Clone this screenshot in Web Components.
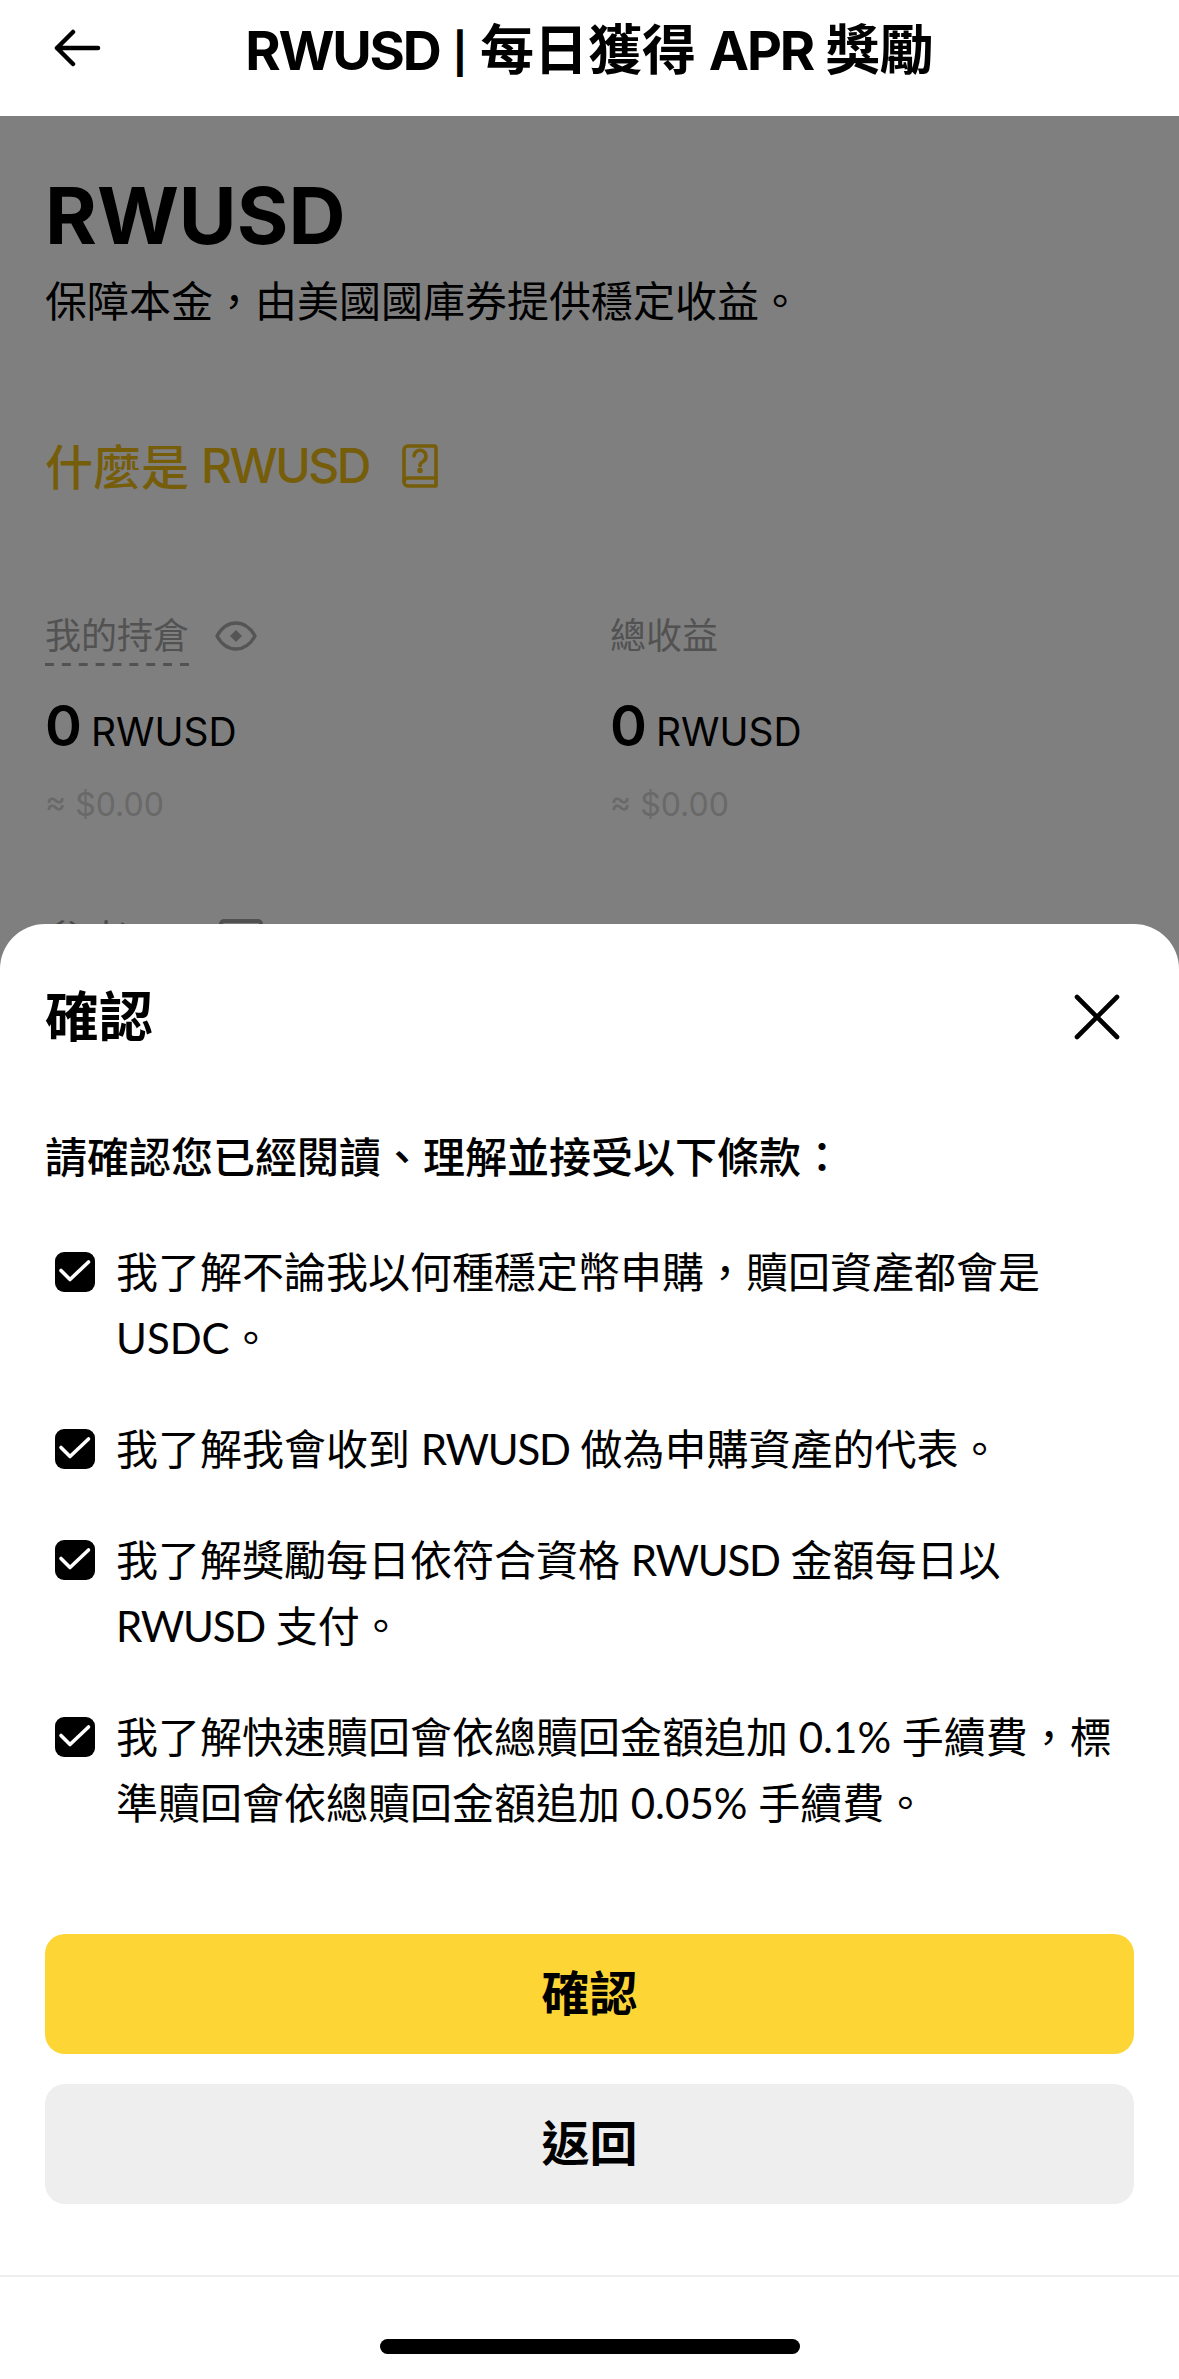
<!DOCTYPE html>
<html lang="zh-Hant">
<head>
<meta charset="utf-8">
<title>RWUSD</title>
<style>
  html, body { margin: 0; padding: 0; background: #fff; }
  body { font-family: "Inter", "Noto Sans CJK TC", sans-serif; color: #000; }
</style>
</head>
<body>
<rw-page>
  <rw-header slot="header"><span>RWUSD</span> <span class="sep">|</span> 每日獲得 <span>APR</span> 獎勵</rw-header>
  <rw-stat slot="stats" label="我的持倉" value="0" unit="RWUSD" fiat="≈ $0.00" dashed eye></rw-stat>
  <rw-stat slot="stats" label="總收益" value="0" unit="RWUSD" fiat="≈ $0.00"></rw-stat>
  <rw-sheet slot="sheet" heading="確認" intro="請確認您已經閱讀、理解並接受以下條款：">
    <rw-check>我了解不論我以何種穩定幣申購，贖回資產都會是 USDC。</rw-check>
    <rw-check>我了解我會收到 <span>RWUSD</span> 做為申購資產的代表。</rw-check>
    <rw-check>我了解獎勵每日依符合資格 <span>RWUSD</span> 金額每日以 <span>RWUSD</span> 支付。</rw-check>
    <rw-check>我了解快速贖回會依總贖回金額追加 0.1% 手續費，標準贖回會依總贖回金額追加 0.05% 手續費。</rw-check>
    <rw-button slot="actions" kind="primary">確認</rw-button>
    <rw-button slot="actions">返回</rw-button>
  </rw-sheet>
</rw-page>

<script>
class RwPage extends HTMLElement {
  constructor() {
    super();
    this.attachShadow({ mode: 'open' });
    this.shadowRoot.innerHTML = `
      <style>
        :host { display: block; position: relative; width: 1179px; height: 2379px; overflow: hidden; }
        main { padding: 61px 45px 0; background: #fff; height: 2202px; position: relative; }
        h1 { margin: 0; font-size: 79px; line-height: 76px; font-weight: 700; }
        .sub { margin: 19px 0 0; font-size: 42px; line-height: 60px; }
        .what { display: flex; align-items: center; margin-top: 100px; height: 64px; color: #ecba14; font-size: 48px; font-weight: 500; }
        .what span { margin: 2px 0 0 12px; letter-spacing: -2.5px; }
        .what svg { margin: 4px 0 0 33px; }
        .stats { display: grid; grid-template-columns: 565px 1fr; margin-top: 110px; }
        .next { display: flex; align-items: center; margin-top: 81px; color: #999; font-size: 42px; line-height: 60px; }
        .next i { display: block; width: 36px; height: 36px; margin-left: 90px; border: 4px solid #a0a0a0; border-radius: 5px; }
        .dim { position: absolute; inset: 0; background: rgba(0,0,0,.5); }
        .sheet { position: absolute; left: 0; right: 0; bottom: 0; }
      </style>
      <slot name="header"></slot>
      <main>
        <h1>RWUSD</h1>
        <p class="sub">保障本金，由美國國庫券提供穩定收益。</p>
        <div class="what">什麼是<span>RWUSD</span>
          <svg width="36" height="44" viewBox="0 0 36 44" fill="none" stroke="currentColor" stroke-width="3.6" stroke-linejoin="round" stroke-linecap="round">
            <path d="M6 2h26a2 2 0 0 1 2 2v38H6a4 4 0 0 1-4-4V6a4 4 0 0 1 4-4z"/>
            <path d="M2 37a4 4 0 0 1 4-3h28"/>
            <path d="M12 12a6 6 0 1 1 9 5.5c-2.2 1.3-3 2.2-3 4.2"/>
            <circle cx="18" cy="26.5" r="1" fill="currentColor"/>
          </svg>
        </div>
        <div class="stats"><slot name="stats"></slot></div>
        <div class="next">參考<i></i></div>
        <div class="dim"></div>
      </main>
      <div class="sheet"><slot name="sheet"></slot></div>
    `;
  }
}

class RwHeader extends HTMLElement {
  constructor() {
    super();
    this.attachShadow({ mode: 'open' });
    this.shadowRoot.innerHTML = `
      <style>
        :host { display: flex; position: relative; height: 116px; align-items: center; justify-content: center; background: #fff; }
        .title { margin-top: -24px; font-size: 54px; font-weight: 700; white-space: nowrap; }
        ::slotted(span) { letter-spacing: -2.2px; }
        ::slotted(.sep) { font-size: 40px; letter-spacing: 0; vertical-align: 2px; }
        .back { position: absolute; left: 54px; top: 27px; }
      </style>
      <svg class="back" width="48" height="42" viewBox="0 0 48 42" fill="none" stroke="#000" stroke-width="4.5" stroke-linecap="round" stroke-linejoin="round">
        <path d="M44 21H3M19 5 3 21l16 16"/>
      </svg>
      <div class="title"><slot></slot></div>
    `;
  }
}

class RwStat extends HTMLElement {
  constructor() {
    super();
    this.attachShadow({ mode: 'open' });
    this.shadowRoot.innerHTML = `
      <style>
        :host { display: block; }
        .head { display: flex; align-items: center; height: 60px; }
        .label { color: #a4a4a4; font-size: 36px; line-height: 60px; }
        .label.dashed { background-image: linear-gradient(90deg, #a4a4a4 9px, transparent 9px); background-size: 16.875px 3px; background-repeat: repeat-x; background-position: 0 100%; }
        .head svg { margin-left: 26px; color: #aaa; }
        .value { display: flex; align-items: baseline; margin-top: 30px; line-height: 60px; }
        .num { font-size: 56px; font-weight: 600; }
        .unit { margin-left: 9px; font-size: 39px; }
        .fiat { margin-top: 18px; color: #d2d2d2; font-size: 32px; line-height: 50px; }
      </style>
      <div class="head">
        <span class="label"></span>
      </div>
      <div class="value"><span class="num"></span><span class="unit"></span></div>
      <div class="fiat"></div>
    `;
  }

  connectedCallback() {
    const root = this.shadowRoot;
    const label = root.querySelector('.label');
    label.textContent = this.getAttribute('label');
    if (this.hasAttribute('dashed')) {
      label.classList.add('dashed');
    }
    if (this.hasAttribute('eye')) {
      root.querySelector('.head').insertAdjacentHTML('beforeend', `
        <svg width="42" height="30" viewBox="0 0 42 30" fill="none" stroke="currentColor" stroke-width="3.5" stroke-linejoin="round">
          <path d="M2 15C7 6 13 2 21 2s14 4 19 13c-5 9-11 13-19 13S7 24 2 15z"/>
          <path d="M21 9 27 15 21 21 15 15z" fill="currentColor" stroke="none"/>
        </svg>`);
    }
    root.querySelector('.num').textContent = this.getAttribute('value');
    root.querySelector('.unit').textContent = this.getAttribute('unit');
    root.querySelector('.fiat').textContent = this.getAttribute('fiat');
  }
}

class RwSheet extends HTMLElement {
  constructor() {
    super();
    this.attachShadow({ mode: 'open' });
    this.shadowRoot.innerHTML = `
      <style>
        :host { display: block; background: #fff; border-radius: 45px 45px 0 0; height: 1455px; overflow: hidden; }
        .top { display: flex; align-items: center; justify-content: space-between; height: 186px; padding: 0 58px 0 45px; }
        h2 { margin: -8px 0 0; font-size: 54px; font-weight: 700; }
        .top svg { margin-right: 1px; }
        .intro { margin: 15px 45px 0; font-size: 42px; font-weight: 500; line-height: 66px; }
        .rows { display: flex; flex-direction: column; gap: 45px; margin: 48px 45px 0 55px; }
        .actions { display: flex; flex-direction: column; gap: 30px; margin: 98px 45px 0; }
        .foot { display: flex; justify-content: center; height: 102px; margin-top: 71px; border-top: 2px solid #eee; box-sizing: border-box; padding-top: 62px; }
        .bar { width: 420px; height: 15px; border-radius: 8px; background: #000; }
      </style>
      <div class="top">
        <h2></h2>
        <svg width="46" height="46" viewBox="0 0 46 46" fill="none" stroke="#000" stroke-width="4.6" stroke-linecap="round">
          <path d="M3 3l40 40M43 3 3 43"/>
        </svg>
      </div>
      <div class="intro"></div>
      <div class="rows"><slot></slot></div>
      <div class="actions"><slot name="actions"></slot></div>
      <div class="foot"><div class="bar"></div></div>
    `;
  }

  connectedCallback() {
    this.shadowRoot.querySelector('h2').textContent = this.getAttribute('heading');
    this.shadowRoot.querySelector('.intro').textContent = this.getAttribute('intro');
  }
}

class RwCheck extends HTMLElement {
  constructor() {
    super();
    this.attachShadow({ mode: 'open' });
    this.shadowRoot.innerHTML = `
      <style>
        :host { display: flex; gap: 21px; font-family: "Lato", "Noto Sans CJK TC", sans-serif; font-size: 42px; line-height: 66px; }
        ::slotted(span) { letter-spacing: -1.2px; }
        .box { flex: none; width: 40px; height: 40px; margin-top: 13px; }
      </style>
      <svg class="box" viewBox="0 0 40 40">
        <rect width="40" height="40" rx="9" fill="#000"/>
        <path d="M6 18.5 15 27.5 33.5 10" fill="none" stroke="#fff" stroke-width="3.6" stroke-linecap="round" stroke-linejoin="round"/>
      </svg>
      <div><slot></slot></div>
    `;
  }
}

class RwButton extends HTMLElement {
  constructor() {
    super();
    this.attachShadow({ mode: 'open' });
    this.shadowRoot.innerHTML = `
      <style>
        :host { display: flex; align-items: center; justify-content: center; box-sizing: border-box; height: 120px; padding-bottom: 8px; border-radius: 20px; background: #eee; font-size: 48px; font-weight: 700; }
        :host([kind="primary"]) { background: #fdd535; }
      </style>
      <slot></slot>
    `;
  }
}

customElements.define('rw-page', RwPage);
customElements.define('rw-header', RwHeader);
customElements.define('rw-stat', RwStat);
customElements.define('rw-sheet', RwSheet);
customElements.define('rw-check', RwCheck);
customElements.define('rw-button', RwButton);
</script>
</body>
</html>
